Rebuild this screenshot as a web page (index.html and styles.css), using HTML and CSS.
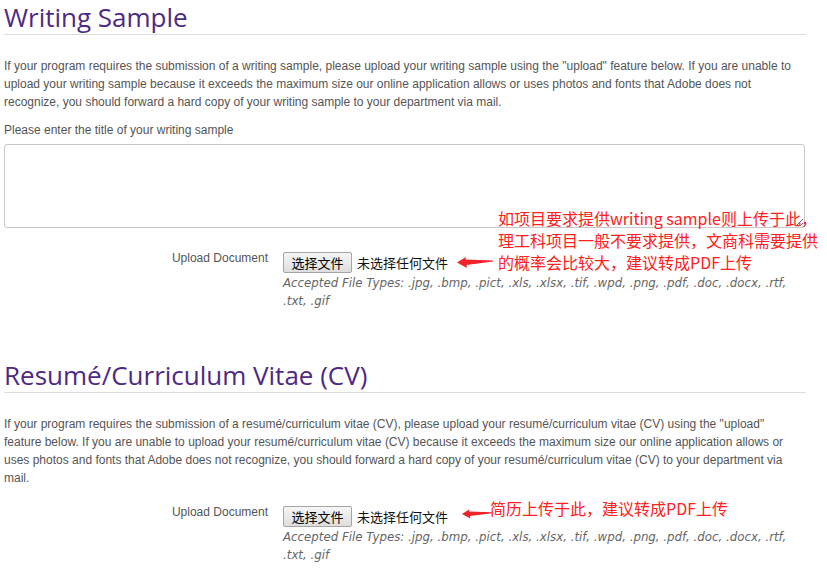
FILE: index.html
```html
<!DOCTYPE html>
<html>
<head>
<meta charset="utf-8">
<link rel="stylesheet" href="styles.css">
</head>
<body>
<div class="page">
  <section class="sec sec-ws">
    <h2 class="title">Writing Sample</h2>
    <p class="desc">If your program requires the submission of a writing sample, please upload your writing sample using the "upload" feature below. If you are unable to upload your writing sample because it exceeds the maximum size our online application allows or uses photos and fonts that Adobe does not recognize, you should forward a hard copy of your writing sample to your department via mail.</p>
    <label class="field-label">Please enter the title of your writing sample</label>
    <textarea class="ta"></textarea>
    <div class="upload">
      <div class="up-label">Upload Document</div>
      <div class="up-body">
        <div class="file"><span class="file-btn">选择文件</span><span class="file-status">未选择任何文件</span></div>
        <div class="types">Accepted File Types: .jpg, .bmp, .pict, .xls, .xlsx, .tif, .wpd, .png, .pdf, .doc, .docx, .rtf, .txt, .gif</div>
      </div>
    </div>
    <svg class="arrow arrow1" viewBox="0 0 36 12" width="36" height="12"><path d="M0 6.5 L9 1 L8.5 3.5 L36 4.5 L36 5.6 L9.5 9 L10 12 Z" fill="#f0222a"/></svg>
    <div class="note note1">如项目要求提供writing sample则上传于此，<br>理工科项目一般不要求提供，文商科需要提供<br>的概率会比较大，建议转成PDF上传</div>
  </section>

  <section class="sec sec-cv">
    <h2 class="title">Resumé/Curriculum Vitae (CV)</h2>
    <p class="desc">If your program requires the submission of a resumé/curriculum vitae (CV), please upload your resumé/curriculum vitae (CV) using the "upload" feature below. If you are unable to upload your resumé/curriculum vitae (CV) because it exceeds the maximum size our online application allows or uses photos and fonts that Adobe does not recognize, you should forward a hard copy of your resumé/curriculum vitae (CV) to your department via mail.</p>
    <div class="upload">
      <div class="up-label">Upload Document</div>
      <div class="up-body">
        <div class="file"><span class="file-btn">选择文件</span><span class="file-status">未选择任何文件</span></div>
        <div class="types">Accepted File Types: .jpg, .bmp, .pict, .xls, .xlsx, .tif, .wpd, .png, .pdf, .doc, .docx, .rtf, .txt, .gif</div>
      </div>
    </div>
    <svg class="arrow arrow2" viewBox="0 0 36 12" width="30" height="11"><path d="M0 6.5 L9 1 L8.5 3.5 L36 4.5 L36 5.6 L9.5 9 L10 12 Z" fill="#f0222a"/></svg>
    <div class="note note2">简历上传于此，建议转成PDF上传</div>
  </section>
</div>
</body>
</html>
```
FILE: styles.css
```css
html, body {
  margin: 0;
  padding: 0;
  background: #fff;
}
.page {
  width: 802px;
  padding-left: 4px;
  font-family: "Liberation Sans", Arial, sans-serif;
  font-size: 12px;
  color: #555;
}
.sec {
  position: relative;
}
.sec-cv {
  margin-top: 48px;
}
.title {
  margin: 0;
  height: 34px;
  border-bottom: 1px solid #ddd;
  font-family: "Open Sans", sans-serif;
  font-weight: 400;
  font-size: 26px;
  line-height: 34px;
  color: #4e2a84;
}
.desc {
  margin: 22px 0 0;
  line-height: 18px;
  padding-right: 2px;
}
.field-label {
  display: block;
  margin-top: 10px;
  line-height: 18px;
}
.ta {
  display: block;
  box-sizing: border-box;
  width: 801px;
  height: 84px;
  margin-top: 5px;
  border: 1px solid #c8c8c8;
  border-radius: 3px;
  resize: vertical;
  background: #fff;
}
.upload {
  display: flex;
  gap: 15px;
  margin-top: 23px;
}
.sec-cv .upload {
  margin-top: 18px;
}
.up-label {
  width: 264px;
  text-align: right;
  line-height: 14px;
}
.up-body {
  width: 522px;
}
.file {
  display: flex;
  align-items: center;
  height: 22px;
  font-family: "Noto Sans CJK SC", sans-serif;
  font-size: 13px;
  color: #111;
}
.file-btn {
  box-sizing: border-box;
  height: 21px;
  width: 69px;
  border: 1px solid #a5a5a5;
  border-radius: 2px;
  background: linear-gradient(#f6f6f6, #dedede);
  text-align: center;
  line-height: 19px;
  color: #000;
  margin-right: 5px;
}
.file-status {
  line-height: 19px;
}
.types {
  font-family: "DejaVu Sans", Verdana, sans-serif;
  font-style: italic;
  font-size: 11.8px;
  line-height: 18px;
  color: #666;
  margin-top: 1px;
}
.arrow {
  position: absolute;
  display: block;
}
.arrow1 {
  left: 453px;
  top: 256px;
}
.arrow2 {
  left: 458px;
  top: 150px;
}
.note {
  position: absolute;
  font-family: "Noto Sans CJK SC", sans-serif;
  font-size: 16px;
  line-height: 22px;
  color: #ff2020;
  white-space: nowrap;
}
.note1 {
  left: 494px;
  top: 207px;
}
.note2 {
  left: 486px;
  top: 139px;
}
```
